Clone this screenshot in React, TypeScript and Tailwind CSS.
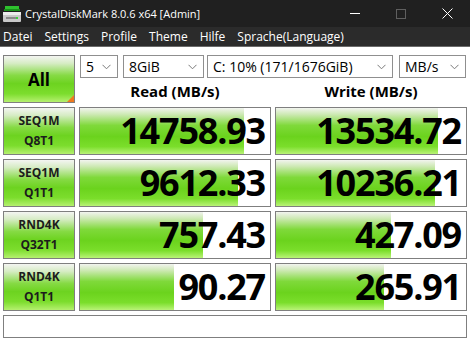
import React from "react";

const rows = [
  { a: "SEQ1M", b: "Q8T1", r: 14758.93, w: 13534.72 },
  { a: "SEQ1M", b: "Q1T1", r: 9612.33, w: 10236.21 },
  { a: "RND4K", b: "Q32T1", r: 757.43, w: 427.09 },
  { a: "RND4K", b: "Q1T1", r: 90.27, w: 265.91 },
];

const barW = (v: number) => Math.round((190 * Math.log10(v * 10)) / 6);

function Chevron() {
  return (
    <svg width="9" height="6" viewBox="0 0 9 6" className="shrink-0">
      <polyline points="0.5,0.8 4.5,4.8 8.5,0.8" fill="none" stroke="#7a7a7a" strokeWidth="1" />
    </svg>
  );
}

function Drop({ text, w, ml }: { text: string; w: string; ml: string }) {
  return (
    <div className={`${w} ${ml} h-[23px] border border-[#8f8f8f] bg-white flex items-center justify-between pl-[5px] pr-[6px] text-[14px] text-black leading-none`}>
      <span>{text}</span>
      <Chevron />
    </div>
  );
}

function Cell({ v }: { v: number }) {
  return (
    <div
      className="w-[192px] h-[48px] border border-[#7f7f7f] bg-white bg-no-repeat bg-[linear-gradient(to_bottom,#f2f4ef_0%,#cde9b3_14%,#7fd93a_38%,#6bd31d_62%,#7bde2b_84%,#b9f377_100%)] flex items-center justify-end pr-[5px]"
      style={{ backgroundSize: `${barW(v)}px 100%` }}
    >
      <span className="text-[36px] font-bold leading-none tracking-[-1.2px] text-black">{v.toFixed(2)}</span>
    </div>
  );
}

const btnGrad =
  "bg-[linear-gradient(to_bottom,#f4f5f2_0%,#d6ecc4_16%,#86da45_42%,#6dd320_60%,#7cdd2d_82%,#b5f06f_100%)]";

export default function App() {
  return (
    <div className="w-[470px] h-[340px] bg-white overflow-hidden" style={{ fontFamily: '"Open Sans", "Noto Sans", sans-serif' }}>
      {/* title bar */}
      <div className="h-[27px] bg-[#202020] flex items-center text-white">
        <svg width="18" height="16" viewBox="0 0 18 16" className="ml-[3px]">
          <rect x="2" y="0" width="14" height="3" fill="#2ec22e" />
          <rect x="1" y="3" width="16" height="2" fill="#1a8f1a" />
          <rect x="0" y="6" width="18" height="10" rx="1" fill="#c9c9c9" />
          <rect x="0" y="6" width="18" height="3" fill="#ececec" />
          <rect x="3" y="11" width="12" height="2" fill="#8a8a8a" />
          <rect x="13" y="11" width="2" height="2" fill="#3ad23a" />
        </svg>
        <span className="ml-[4px] text-[11px] leading-none">CrystalDiskMark 8.0.6 x64 [Admin]</span>
        <div className="ml-auto flex items-center h-full">
          <div className="w-[46px] h-full flex items-center justify-center">
            <div className="w-[10px] h-px bg-white" />
          </div>
          <div className="w-[46px] h-full flex items-center justify-center">
            <div className="w-[10px] h-[10px] border border-[#5f5f5f]" />
          </div>
          <div className="w-[46px] h-full flex items-center justify-center">
            <svg width="11" height="11" viewBox="0 0 11 11">
              <path d="M0.5 0.5 L10.5 10.5 M10.5 0.5 L0.5 10.5" stroke="#ffffff" strokeWidth="1" />
            </svg>
          </div>
        </div>
      </div>
      {/* menu bar */}
      <div className="h-[20px] bg-[#2b2b2b] border-b border-[#6a6a6a] flex items-center gap-[12px] px-[3px] text-[12px] text-white leading-none">
        <span>Datei</span>
        <span>Settings</span>
        <span>Profile</span>
        <span>Theme</span>
        <span>Hilfe</span>
        <span>Sprache(Language)</span>
      </div>
      {/* body */}
      <div className="pt-[8px] pl-[3px] flex flex-col gap-[4px]">
        <div className="flex h-[48px]">
          <div className={`relative w-[72px] h-[48px] border border-[#7f7f7f] ${btnGrad} flex items-center justify-center overflow-hidden`}>
            <span className="text-[17px] font-bold text-black leading-none">All</span>
            <div className="absolute right-0 bottom-0 w-0 h-0 border-l-[7px] border-l-transparent border-b-[7px] border-b-[#f07a1e]" />
          </div>
          <div className="ml-[4px] flex flex-col">
            <div className="flex">
              <Drop text="5" w="w-[38px]" ml="ml-[1px]" />
              <Drop text="8GiB" w="w-[81px]" ml="ml-[5px]" />
              <Drop text="C: 10% (171/1676GiB)" w="w-[186px]" ml="ml-[3px]" />
              <Drop text="MB/s" w="w-[67px]" ml="ml-[6px]" />
            </div>
            <div className="flex gap-[4px] flex-1 items-center pt-[1px]">
              <div className="w-[192px] text-center text-[15px] font-bold text-black leading-none">Read (MB/s)</div>
              <div className="w-[192px] text-center text-[15px] font-bold text-black leading-none">Write (MB/s)</div>
            </div>
          </div>
        </div>
        {rows.map((r, i) => (
          <div key={i} className="flex gap-[4px]">
            <div className={`w-[72px] h-[48px] border border-[#7f7f7f] ${btnGrad} flex flex-col items-center justify-center gap-[8px] text-[12px] font-bold text-[#1c1c1c] leading-none`}>
              <span>{r.a}</span>
              <span>{r.b}</span>
            </div>
            <Cell v={r.r} />
            <Cell v={r.w} />
          </div>
        ))}
        <div className="w-[464px] h-[23px] border border-[#7f7f7f] bg-white" />
      </div>
    </div>
  );
}
